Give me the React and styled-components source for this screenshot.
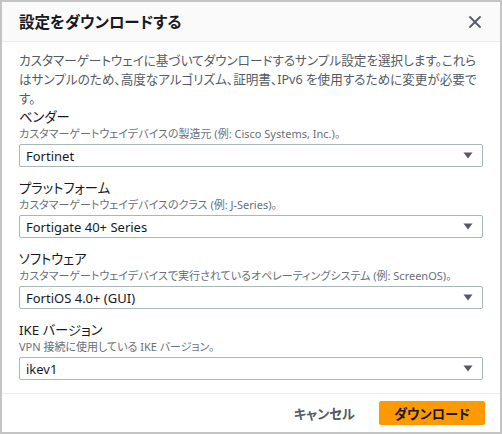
import React from "react";
import styled, { createGlobalStyle } from "styled-components";

const Global = createGlobalStyle`
  html, body { margin: 0; padding: 0; background: #fff; }
  body {
    font-family: "Noto Sans", "Noto Sans CJK JP", sans-serif;
    font-feature-settings: "palt";
    color: #16191f;
  }
`;

const Dialog = styled.div`
  box-sizing: border-box;
  width: 502px;
  height: 434px;
  border: 2px solid #c4c4c4;
  display: flex;
  flex-direction: column;
  background: #fff;
`;

const Header = styled.div`
  height: 40px;
  box-sizing: border-box;
  background: #fafafa;
  border-bottom: 1px solid #eaeded;
  display: flex;
  align-items: center;
  justify-content: space-between;
  padding: 0 17px;
`;

const Title = styled.h2`
  margin: 0;
  font-size: 15.5px;
  font-weight: 700;
  color: #16191f;
`;

const Close = styled.button`
  border: none;
  background: none;
  padding: 0;
  width: 14px;
  height: 14px;
  display: flex;
  margin-right: 1px;
  svg { display: block; }
`;

const Body = styled.div`
  flex: 1;
  padding: 9px 17px 0;
  display: flex;
  flex-direction: column;
  border-bottom: 1px solid #eaeded;
`;

const Desc = styled.p`
  margin: 0;
  font-size: 12.6px;
  line-height: 19px;
  color: #545b64;
`;

const Fields = styled.div`
  display: flex;
  flex-direction: column;
  gap: 12px;
`;

const Field = styled.div`
  display: flex;
  flex-direction: column;
`;

const Label = styled.div`
  font-size: 13.3px;
  line-height: 18px;
  color: #16191f;
`;

const Hint = styled.div`
  font-size: 11px;
  line-height: 16px;
  color: #687078;
  white-space: nowrap;
`;

const Select = styled.div`
  margin-top: 2px;
  height: 23px;
  box-sizing: border-box;
  border: 1px solid #aab7b8;
  border-radius: 2px;
  display: flex;
  align-items: center;
  justify-content: space-between;
  padding: 0 9px 0 6px;
  font-size: 13px;
  color: #16191f;
`;

const Footer = styled.div`
  height: 38px;
  display: flex;
  align-items: center;
  justify-content: flex-end;
  gap: 4px;
  padding: 0 15px 0 0;
`;

const CancelButton = styled.button`
  border: none;
  background: none;
  font-family: inherit;
  font-feature-settings: "palt";
  font-size: 13.3px;
  font-weight: 700;
  color: #545b64;
  padding: 0 20px;
  height: 24px;
`;

const PrimaryButton = styled.button`
  border: 1px solid #ff9900;
  background: #ff9900;
  border-radius: 2px;
  font-family: inherit;
  font-feature-settings: "palt";
  font-size: 13.3px;
  font-weight: 700;
  color: #16191f;
  width: 106px;
  height: 24px;
  padding: 0;
`;

const Arrow = () => (
  <svg width="10" height="7" viewBox="0 0 10 7">
    <path d="M0.5 0.5 H9.5 L5 6.5 Z" fill="#545b64" />
  </svg>
);

const fields = [
  {
    label: "ベンダー",
    hint: "カスタマーゲートウェイデバイスの製造元 (例: Cisco Systems, Inc.)。",
    value: "Fortinet",
  },
  {
    label: "プラットフォーム",
    hint: "カスタマーゲートウェイデバイスのクラス (例: J-Series)。",
    value: "Fortigate 40+ Series",
  },
  {
    label: "ソフトウェア",
    hint: "カスタマーゲートウェイデバイスで実行されているオペレーティングシステム (例: ScreenOS)。",
    value: "FortiOS 4.0+ (GUI)",
  },
  {
    label: "IKE バージョン",
    hint: "VPN 接続に使用している IKE バージョン。",
    value: "ikev1",
  },
];

export default function App() {
  return (
    <>
      <Global />
      <Dialog>
        <Header>
          <Title>設定をダウンロードする</Title>
          <Close aria-label="close">
            <svg width="14" height="14" viewBox="0 0 14 14">
              <path d="M2 2 L12 12 M12 2 L2 12" stroke="#545b64" strokeWidth="1.8" strokeLinecap="round" />
            </svg>
          </Close>
        </Header>
        <Body>
          <Desc>
            カスタマーゲートウェイに基づいてダウンロードするサンプル設定を選択します。これらはサンプルのため、高度なアルゴリズム、証明書、IPv6 を使用するために変更が必要です。
          </Desc>
          <Fields>
            {fields.map((f) => (
              <Field key={f.label}>
                <Label>{f.label}</Label>
                <Hint>{f.hint}</Hint>
                <Select>
                  <span>{f.value}</span>
                  <Arrow />
                </Select>
              </Field>
            ))}
          </Fields>
        </Body>
        <Footer>
          <CancelButton>キャンセル</CancelButton>
          <PrimaryButton>ダウンロード</PrimaryButton>
        </Footer>
      </Dialog>
    </>
  );
}
